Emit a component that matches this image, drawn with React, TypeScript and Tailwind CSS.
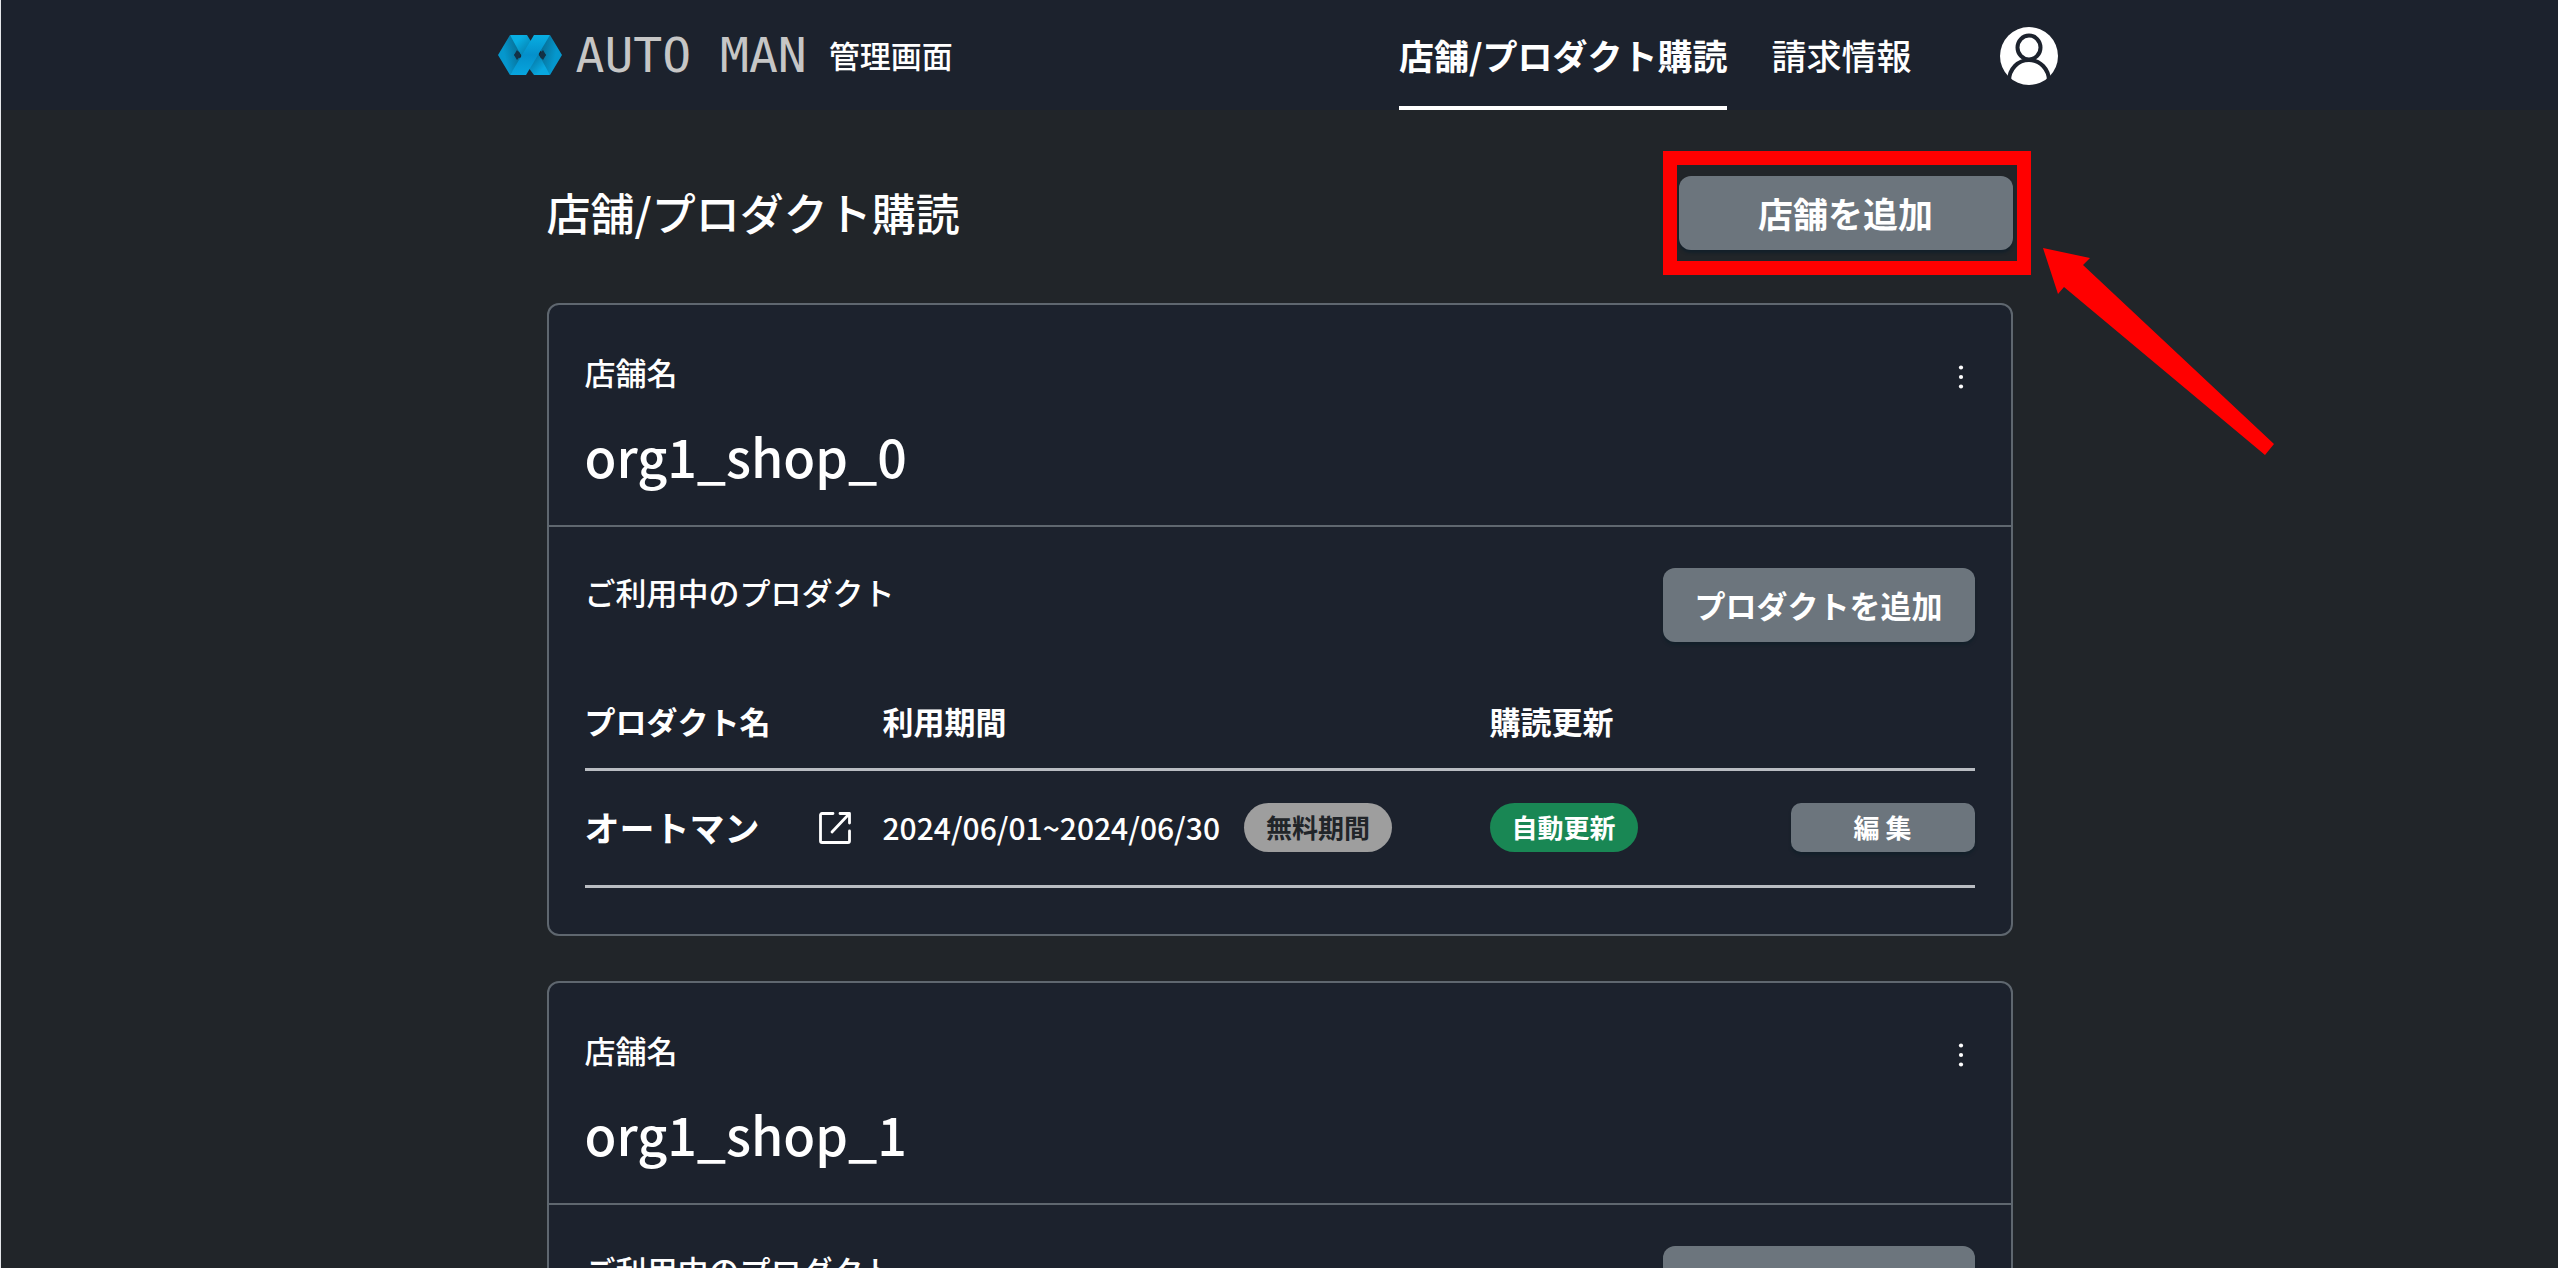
type Shop = { id: number; name: string };

const shops: Shop[] = [
  { id: 0, name: "org1_shop_0" },
  { id: 1, name: "org1_shop_1" },
];

function LogoMark() {
  return (
    <svg className="h-10 w-16" viewBox="0 0 64 40" aria-hidden="true">
      <defs>
        <linearGradient id="bandLight" x1="0" y1="0" x2="0" y2="1">
          <stop offset="0" stopColor="#08aee2" />
          <stop offset="0.5" stopColor="#0490cb" />
          <stop offset="1" stopColor="#07a5de" />
        </linearGradient>
        <linearGradient id="bandFall" x1="0" y1="0" x2="1" y2="1">
          <stop offset="0.3" stopColor="#08aee2" />
          <stop offset="1" stopColor="#046f9c" />
        </linearGradient>
        <linearGradient id="bandRise" x1="1" y1="1" x2="0" y2="0">
          <stop offset="0.3" stopColor="#08a8e0" />
          <stop offset="1" stopColor="#04638c" />
        </linearGradient>
        <linearGradient id="sideLeft" x1="0" y1="0.7" x2="1" y2="0.3">
          <stop offset="0.3" stopColor="#0597cd" />
          <stop offset="1" stopColor="#08668a" />
        </linearGradient>
        <linearGradient id="sideRight" x1="1" y1="0.7" x2="0" y2="0.3">
          <stop offset="0.3" stopColor="#0597cd" />
          <stop offset="1" stopColor="#08668a" />
        </linearGradient>
      </defs>
      <path d="M12 0 0 20 12 40 24 24 16 20 24 14Z" fill="url(#sideLeft)" />
      <path d="M52 0 64 20 52 40 40 26 48 20 40 14Z" fill="url(#sideRight)" />
      <path d="M12 0H29L34 8 24 22Z" fill="url(#bandFall)" />
      <path d="M52 40H36L30 32 40 18Z" fill="url(#bandRise)" />
      <path d="M19 15 23 20 19 25 16 20Z" fill="#123246" />
      <path d="M45 15 48 20 45 25 41 20Z" fill="#123246" />
      <path d="M36 0H52L28 40H12Z" fill="url(#bandLight)" />
    </svg>
  );
}

function AvatarIcon() {
  return (
    <svg className="size-[58px]" viewBox="0 0 58 58" aria-hidden="true">
      <circle cx="29" cy="29" r="29" fill="#fff" />
      <path
        d="M9 54C9 42 18 33 29 33s20 9 20 21"
        fill="none"
        stroke="#1c222d"
        strokeWidth="4"
      />
      <ellipse cx="29" cy="20.5" rx="11.5" ry="12" fill="#fff" stroke="#1c222d" strokeWidth="4" />
    </svg>
  );
}

function ExternalIcon() {
  return (
    <svg
      className="size-8"
      viewBox="0 0 32 32"
      fill="none"
      stroke="#fff"
      strokeWidth="2.8"
      strokeLinecap="round"
      strokeLinejoin="round"
      aria-hidden="true"
    >
      <path d="M14 1.5H3A1.5 1.5 0 0 0 1.5 3v26A1.5 1.5 0 0 0 3 30.5h26a1.5 1.5 0 0 0 1.5-1.5V19" />
      <path d="M21 1.5h9.5V11M30 2 13 20" />
    </svg>
  );
}

function DotsIcon() {
  return (
    <svg className="size-7" viewBox="0 0 28 28" fill="#fff" aria-hidden="true">
      <circle cx="14" cy="4.5" r="2.1" />
      <circle cx="14" cy="14" r="2.1" />
      <circle cx="14" cy="23.5" r="2.1" />
    </svg>
  );
}

function Header() {
  return (
    <header className="h-[110px] bg-[#1c222d]">
      <div className="mx-auto flex h-full max-w-[1564px] items-center pr-1">
        <a href="#home" className="flex items-center">
          <LogoMark />
          <span className="ml-[14px] font-['DejaVu_Sans_Mono',monospace] text-[48px] leading-10 font-normal text-[#c6c6c6]">
            AUTO MAN
          </span>
        </a>
        <span className="ml-[22px] text-[31px]">管理画面</span>
        <nav className="ml-auto flex h-full gap-11 text-[35px]">
          <a
            href="#shops"
            aria-current="page"
            className="flex items-center border-y-4 border-t-transparent border-b-white font-bold"
          >
            店舗/プロダクト購読
          </a>
          <a href="#billing" className="flex items-center">
            請求情報
          </a>
        </nav>
        <button type="button" aria-label="アカウント" className="ml-[88px] pt-0.5">
          <AvatarIcon />
        </button>
      </div>
    </header>
  );
}

function ShopCard({ shop }: { shop: Shop }) {
  return (
    <section className="rounded-xl border-2 border-[#5f676f] bg-[#1c222d]">
      <div className="flex items-start justify-between border-b-2 border-[#5f676f] px-9 pt-11 pb-6">
        <div>
          <p className="text-[31px] leading-[46px]">店舗名</p>
          <h2 className="mt-4 text-[52px] leading-[90px]">{shop.name}</h2>
        </div>
        <button type="button" aria-label={shop.name + " メニュー"} className="mt-3.5">
          <DotsIcon />
        </button>
      </div>
      <div className="px-9 pt-[41px] pb-[46px]">
        <div className="flex items-start justify-between">
          <h3 className="text-[31px] leading-12">ご利用中のプロダクト</h3>
          <button
            type="button"
            className="h-[74px] rounded-xl bg-[#6c757d] px-8 text-[31px] font-bold shadow-[0_3px_3px_#13202a]"
          >
            プロダクトを追加
          </button>
        </div>
        <table className="mt-[55px] w-full table-fixed text-left text-[31px]">
          <colgroup>
            <col className="w-[234px]" />
            <col className="w-[64px]" />
            <col className="w-[607px]" />
            <col />
            <col className="w-[184px]" />
          </colgroup>
          <thead>
            <tr className="h-[72px] border-b-3 border-[#b9bdc2] align-top leading-12">
              <th scope="col" colSpan={2}>プロダクト名</th>
              <th scope="col">利用期間</th>
              <th scope="col">購読更新</th>
              <td />
            </tr>
          </thead>
          <tbody>
            <tr className="h-[117px] border-b-3 border-[#b9bdc2]">
              <th scope="row" className="text-[35px]">オートマン</th>
              <td>
                <a href="#product" aria-label="オートマンを開く" className="block">
                  <ExternalIcon />
                </a>
              </td>
              <td>
                <div className="flex items-center gap-6">
                  <span className="text-[30px]">2024/06/01~2024/06/30</span>
                  <span className="rounded-full bg-[#9e9e9e] px-[22px] pb-0.5 text-[26px] leading-[47px] font-bold text-[#212529]">
                    無料期間
                  </span>
                </div>
              </td>
              <td>
                <span className="block w-fit rounded-full bg-[#198754] px-[22px] pb-0.5 text-[26px] leading-[47px] font-bold">
                  自動更新
                </span>
              </td>
              <td>
                <button
                  type="button"
                  className="block h-[49px] w-full rounded-[10px] bg-[#6c757d] pb-0.5 text-[26px] font-bold shadow-[0_3px_3px_#13202a]"
                >
                  編 集
                </button>
              </td>
            </tr>
          </tbody>
        </table>
      </div>
    </section>
  );
}

export default function App() {
  return (
    <div
      lang="ja"
      className="h-screen overflow-hidden border-l border-[#e5e7eb] bg-[#212529] font-['Noto_Sans_CJK_JP',sans-serif] font-medium text-white"
    >
      <Header />
      <main className="mx-auto flex max-w-[1466px] flex-col gap-[45px] pt-[66px]">
        <div className="-mb-[45px] flex h-[127px] items-start justify-between">
          <h1 className="text-[44px] leading-[72px]">店舗/プロダクト購読</h1>
          <div className="relative">
            <button
              type="button"
              className="h-[74px] w-[334px] rounded-xl bg-[#6c757d] text-[35px] font-bold shadow-[0_3px_3px_#13202a]"
            >
              店舗を追加
            </button>
            <div className="pointer-events-none absolute -top-[25px] -right-[18px] h-[124px] w-[368px] border-14 border-[#ff0000]" />
            <svg
              className="pointer-events-none absolute top-[72px] left-[364px] h-[208px] w-[232px]"
              viewBox="0 0 232 208"
              fill="#ff0000"
              aria-hidden="true"
            >
              <path d="M0 0 47 10 40 17 231 196 222 207 21 39 15 46Z" />
            </svg>
          </div>
        </div>
        {shops.map((shop) => (
          <ShopCard key={shop.id} shop={shop} />
        ))}
      </main>
    </div>
  );
}
